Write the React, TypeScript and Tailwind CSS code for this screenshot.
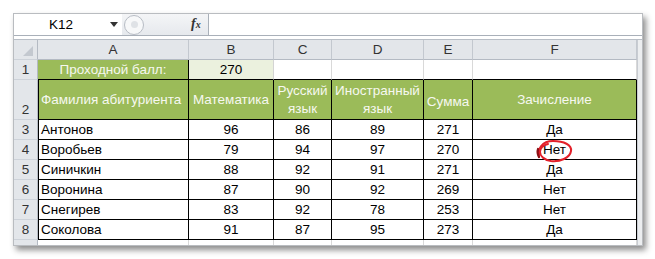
import type { ReactNode } from "react";

type Row = { name: string; math: number; rus: number; lang: number; sum: number; ok: boolean };

const rows: Row[] = [
  { name: "Антонов", math: 96, rus: 86, lang: 89, sum: 271, ok: true },
  { name: "Воробьев", math: 79, rus: 94, lang: 97, sum: 270, ok: false },
  { name: "Синичкин", math: 88, rus: 92, lang: 91, sum: 271, ok: true },
  { name: "Воронина", math: 87, rus: 90, lang: 92, sum: 269, ok: false },
  { name: "Снегирев", math: 83, rus: 92, lang: 78, sum: 253, ok: false },
  { name: "Соколова", math: 91, rus: 87, lang: 95, sum: 273, ok: true },
];

const cols = ["A", "B", "C", "D", "E", "F"];

function RowHead({ children, className = "" }: { children?: ReactNode; className?: string }) {
  return (
    <div
      className={`flex justify-center border-r border-b border-r-[#b4bac3] border-b-[#cdd2d9] bg-[#e3e6ea] text-[#333] ${className}`}
    >
      {children}
    </div>
  );
}

function Cell({ children, className = "" }: { children?: ReactNode; className?: string }) {
  return <div className={`flex items-center border-r border-b border-black ${className}`}>{children}</div>;
}

export default function App() {
  return (
    <div className="h-[259px] w-[655px] bg-white pl-[13px] pt-[13px] font-['Liberation_Sans',sans-serif] text-[13.5px] leading-none text-black">
      <div className="flex h-[233px] w-[630px] flex-col overflow-hidden border border-[#b9bcc0] bg-white shadow-[3px_4px_6px_rgba(0,0,0,0.45)]">
        {/* formula bar */}
        <div className="flex h-[22px] shrink-0 border-b border-[#a9b0b9] bg-gradient-to-b from-[#f4f5f7] to-[#e6e9ed]">
          <div className="flex w-[108px] items-center bg-white pl-[35px] pr-[4px]">
            <span>K12</span>
            <svg className="ml-auto" width="8" height="5" viewBox="0 0 8 5">
              <path d="M0 0h8L4 5z" fill="#333" />
            </svg>
          </div>
          <div className="relative w-[86px]">
            <div className="absolute left-[2px] top-[1px] h-[20px] w-[20px] rounded-full border border-[#b7bcc4] bg-[#f7f8f9]" />
            <div className="absolute left-[9px] top-[7px] h-[7px] w-[7px] rounded-full bg-[#dfe2e6]" />
            <span className="absolute left-[69px] top-[3px] font-['Liberation_Serif',serif] text-[14px] italic font-bold text-[#333]">
              f<span className="text-[10px]">x</span>
            </span>
          </div>
          <div className="flex-1 border-l border-[#a9b0b9] bg-white" />
        </div>
        <div className="h-[4px] shrink-0 border-b border-[#b8bec6] bg-white" />

        <div className="grid grid-cols-[24px_151px_85px_58px_92px_49px_164px_7px] grid-rows-[20px_20px_40px_20px_20px_20px_20px_20px_20px_6px]">
          {/* column header */}
          <RowHead className="relative">
            <svg className="absolute bottom-[3px] right-[4px]" width="10" height="10" viewBox="0 0 10 10">
              <path d="M10 0v10H0z" fill="#c3c8cf" />
            </svg>
          </RowHead>
          {cols.map((c) => (
            <div
              key={c}
              className="flex items-center justify-center border-r border-b border-r-[#c3c8cf] border-b-[#b4bac3] bg-[#e3e6ea] text-[#333]"
            >
              {c}
            </div>
          ))}
          <div className="row-span-10 border-l border-[#c8ccd2] bg-[#eceef0]" />

          {/* row 1 */}
          <RowHead className="items-center">1</RowHead>
          <div className="flex items-center justify-center border-r border-b border-black bg-[#9bbb59] text-[#f6f8f0]">
            Проходной балл:
          </div>
          <div className="flex items-center justify-center border-r border-b border-r-[#d4d4d4] border-b-black bg-[#ebf1de]">
            270
          </div>
          <div className="border-r border-b border-r-[#d9d9d9] border-b-black" />
          <div className="border-r border-b border-r-[#d9d9d9] border-b-black" />
          <div className="border-r border-b border-r-[#d9d9d9] border-b-black" />
          <div className="border-r border-b border-r-[#d9d9d9] border-b-black" />

          {/* row 2 */}
          <RowHead className="items-end pb-[3px]">2</RowHead>
          <Cell className="border-l bg-[#9bbb59] pl-[2px] text-[#f6f8f0]">Фамилия абитуриента</Cell>
          <Cell className="justify-center bg-[#9bbb59] text-[#f6f8f0]">Математика</Cell>
          <Cell className="flex-col justify-center gap-[5px] bg-[#9bbb59] text-center text-[#f6f8f0]">
            <span>Русский</span>
            <span>язык</span>
          </Cell>
          <Cell className="flex-col justify-center gap-[5px] bg-[#9bbb59] text-center text-[#f6f8f0]">
            <span>Иностранный</span>
            <span>язык</span>
          </Cell>
          <Cell className="justify-center bg-[#9bbb59] pt-[4px] text-[#f6f8f0]">Сумма</Cell>
          <Cell className="justify-center bg-[#9bbb59] text-[#f6f8f0]">Зачисление</Cell>

          {rows.map((r, i) => (
            <div key={r.name} className="contents">
              <RowHead className="items-center">{i + 3}</RowHead>
              <Cell className="border-l pl-[2px]">{r.name}</Cell>
              <Cell className="justify-center">{r.math}</Cell>
              <Cell className="justify-center">{r.rus}</Cell>
              <Cell className="justify-center">{r.lang}</Cell>
              <Cell className="justify-center">{r.sum}</Cell>
              <Cell className="relative justify-center">
                {r.ok ? "Да" : "Нет"}
                {i === 1 && (
                  <svg
                    className="absolute left-[62px] top-[-1px]"
                    width="40"
                    height="24"
                    viewBox="0 0 40 24"
                  >
                    <path
                      d="M4 18 C2 10 7 2 18 2 C29 2 37 6 36 12 C35 19 25 23 16 22 C9 21 5 17 5 13 C5 9 9 6 13 5"
                      fill="none"
                      stroke="#e3202a"
                      strokeWidth="2"
                      strokeLinecap="round"
                    />
                    <path d="M3 10 C2 13 3 16 4 18" fill="none" stroke="#8c1015" strokeWidth="2.2" strokeLinecap="round" />
                  </svg>
                )}
              </Cell>
            </div>
          ))}

          {/* row 9 (cut off) */}
          <RowHead />
          {cols.map((c) => (
            <div key={c} className="border-r border-[#d9d9d9]" />
          ))}
        </div>
      </div>
    </div>
  );
}
